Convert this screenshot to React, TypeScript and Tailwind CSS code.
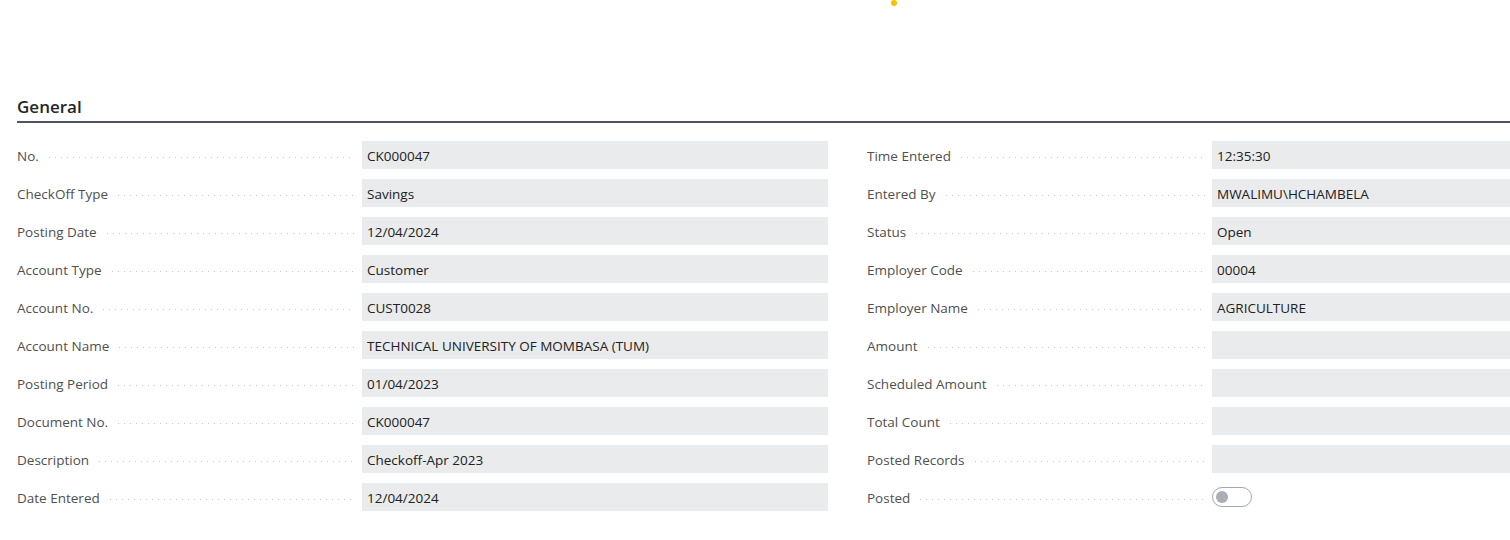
import React from "react";

const left: [string, string][] = [
  ["No.", "CK000047"],
  ["CheckOff Type", "Savings"],
  ["Posting Date", "12/04/2024"],
  ["Account Type", "Customer"],
  ["Account No.", "CUST0028"],
  ["Account Name", "TECHNICAL UNIVERSITY OF MOMBASA (TUM)"],
  ["Posting Period", "01/04/2023"],
  ["Document No.", "CK000047"],
  ["Description", "Checkoff-Apr 2023"],
  ["Date Entered", "12/04/2024"],
];

const right: [string, string | null][] = [
  ["Time Entered", "12:35:30"],
  ["Entered By", "MWALIMU\\HCHAMBELA"],
  ["Status", "Open"],
  ["Employer Code", "00004"],
  ["Employer Name", "AGRICULTURE"],
  ["Amount", ""],
  ["Scheduled Amount", ""],
  ["Total Count", ""],
  ["Posted Records", ""],
  ["Posted", null],
];

function Row({ label, value }: { label: string; value: string | null }) {
  return (
    <div className="flex h-[28px] items-center">
      <div className="flex w-[345px] shrink-0 items-center pr-[7px] pt-[2px]">
        <span className="shrink-0 whitespace-nowrap text-[13.5px] text-[#505050]">{label}</span>
        <span className="ml-[10px] mt-[3px] h-[1.5px] flex-1 bg-[linear-gradient(to_right,#c4c4c4_1.5px,transparent_1.5px)] bg-[length:6px_1.5px] bg-repeat-x" />
      </div>
      {value === null ? (
        <div className="flex h-[20px] w-[40px] items-center rounded-full border border-[#a3a7ae] bg-white px-[3px]">
          <div className="h-[12px] w-[12px] rounded-full bg-[#a9adb5]" />
        </div>
      ) : (
        <div className="flex h-[28px] w-[466px] items-center bg-[#eaebec] px-[5px] pt-[2px] text-[13.5px] text-[#212121]">
          {value}
        </div>
      )}
    </div>
  );
}

export default function App() {
  return (
    <div
      className="relative h-[540px] w-[1510px] overflow-hidden bg-white"
      style={{ fontFamily: '"Segoe UI", "Open Sans", "Noto Sans", sans-serif' }}
    >
      <div className="absolute left-[891px] top-0 h-[6px] w-[6px] rounded-full bg-[#f5c400]" />
      <div className="pl-[17px] pt-[94px]">
        <div className="pt-[1px] text-[17px] font-semibold leading-[24px] text-[#262626]">General</div>
        <div className="mt-[2px] h-[2px] w-[1493px] bg-[#4f5462]" />
        <div className="mt-[18px] flex gap-[39px]">
          <div className="flex w-[811px] shrink-0 flex-col gap-[10px]">
            {left.map(([l, v]) => (
              <Row key={l} label={l} value={v} />
            ))}
          </div>
          <div className="flex w-[811px] shrink-0 flex-col gap-[10px]">
            {right.map(([l, v]) => (
              <Row key={l} label={l} value={v} />
            ))}
          </div>
        </div>
      </div>
    </div>
  );
}
